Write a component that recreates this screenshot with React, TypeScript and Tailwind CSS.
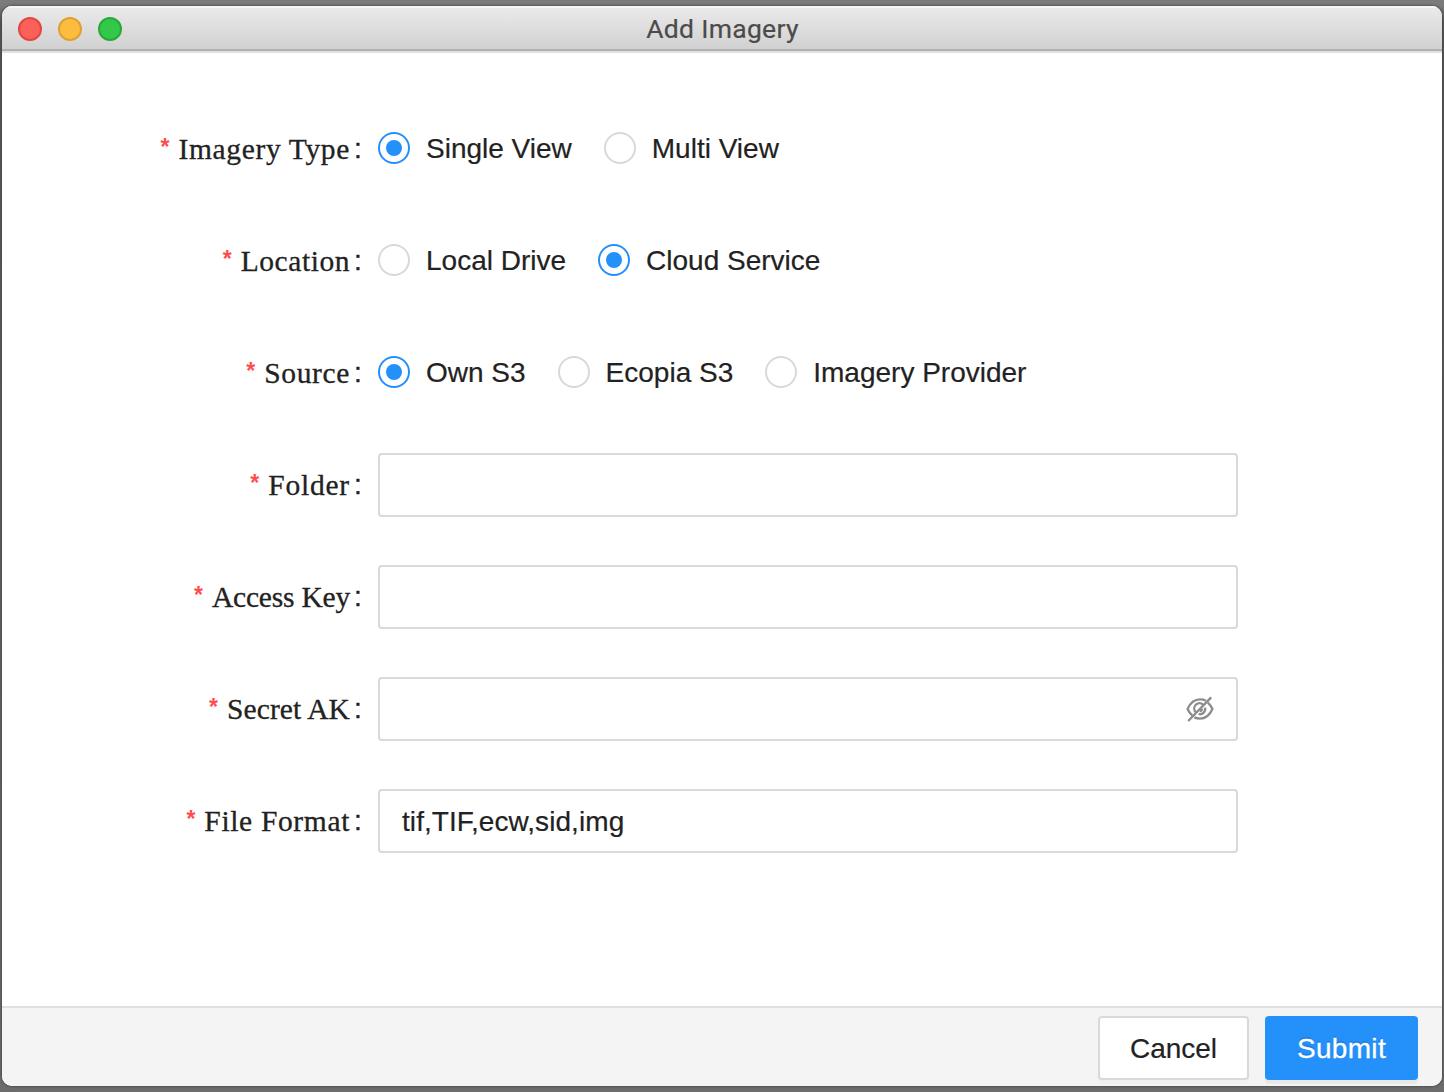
import type { ReactNode } from "react";

const sans = "font-['Liberation_Sans',Arial,sans-serif]";

function Radio({ checked, label }: { checked?: boolean; label: string }) {
  return (
    <label className="flex items-center">
      <span
        className={
          "flex size-8 shrink-0 items-center justify-center rounded-full border-2 bg-white " +
          (checked ? "border-[#2490fa]" : "border-[#d9d9d9]")
        }
      >
        {checked && <span className="size-4 rounded-full bg-[#2490fa]" />}
      </span>
      <span className="px-4 pt-[2px] leading-8 whitespace-nowrap [-webkit-text-stroke:0.2px_#222222]">{label}</span>
    </label>
  );
}

function Row({ label, tracking, children }: { label: string; tracking: string; children: ReactNode }) {
  return (
    <div className="flex h-16">
      <div className="flex w-[376px] shrink-0 items-center justify-end pr-[16px]">
        <span className="mr-[9px] pb-[5px] text-[23px] leading-8 font-bold text-[#ff4d4f]">*</span>
        <span className={"font-['Liberation_Serif',Georgia,serif] text-[29.5px] leading-8 whitespace-nowrap [-webkit-text-stroke:0.3px_#222222] " + tracking}>{label}</span>
        <span className="ml-[4px] w-2 text-[28px] leading-8 [-webkit-text-stroke:0.4px_#222222]">:</span>
      </div>
      {children}
    </div>
  );
}

function Field({ value, children }: { value?: string; children?: ReactNode }) {
  return (
    <div className="flex w-[860px] items-center justify-between rounded-[4px] border-2 border-[#d9d9d9] bg-white px-[22px]">
      <span className="pt-[2px] leading-8 tracking-[0.07px] [-webkit-text-stroke:0.2px_#222222]">{value}</span>
      {children}
    </div>
  );
}

function EyeInvisible() {
  return (
    <svg width="28" height="28" viewBox="0 0 28 28" fill="none" stroke="#8c8c8c" strokeWidth="2.3">
      <path d="M20 5.7C18.2 4.8 16.1 4.4 14 4.4C8.4 4.4 4.2 8 1.6 14C2.6 16.4 4.2 18.8 6.4 20.6" />
      <path d="M21.8 7.6C23.8 9.3 25.4 11.6 26.4 14C23.8 20 19.6 23.6 14 23.6C12 23.6 10 23.2 8.3 22.4" />
      <path d="M17.2 9.8A5.2 5.2 0 0 0 9.8 17.2" />
      <path d="M19 12.6A5.2 5.2 0 0 1 12.6 19" />
      <path d="M16 13.8A2.2 2.2 0 0 1 13.8 16" />
      <path d="M2.2 26L25.2 2.4" />
    </svg>
  );
}

export default function App() {
  return (
    <div className={"h-[1092px] w-[1444px] overflow-hidden bg-linear-to-b from-[#7b7b7b] from-[0.5%] via-[#565656] via-[2%] to-[#6c6c6c] px-[2px] pt-[6px] text-[28px] text-[#222222] " + sans}>
      <div className="flex h-[1080px] flex-col overflow-hidden rounded-[10px] bg-white shadow-[0_0_3px_#333]">
        <header className="flex h-[45px] shrink-0 items-center border-b-2 border-[#b0b0b0] bg-linear-to-b from-[#ebebeb] to-[#d1d1d1] shadow-[inset_0_2px_0_#f6f6f6]">
          <div className="flex w-[200px] gap-4 pt-[3px] pl-4">
            <span className="size-6 rounded-full border-2 border-[#e2463f] bg-[#fc605b]" />
            <span className="size-6 rounded-full border-2 border-[#dfa033] bg-[#fdbc40]" />
            <span className="size-6 rounded-full border-2 border-[#27aa35] bg-[#34c84a]" />
          </div>
          <h1 className="flex-1 pt-[3px] text-center font-[Roboto,sans-serif] text-[26.5px] leading-8 tracking-[0.3px] text-[#4b4b4b] [-webkit-text-stroke:0.2px_#4b4b4b]">Add Imagery</h1>
          <div className="w-[199px]" />
        </header>
        <main className="flex flex-1 flex-col gap-12 border-t-2 border-[#dde1e5] pt-16">
          <Row label="Imagery Type" tracking="tracking-[0.65px]">
            <div className="flex items-center gap-4 pb-[2px]">
              <Radio checked label="Single View" />
              <Radio label="Multi View" />
            </div>
          </Row>
          <Row label="Location" tracking="tracking-[0.55px]">
            <div className="flex items-center gap-4 pb-[2px]">
              <Radio label="Local Drive" />
              <Radio checked label="Cloud Service" />
            </div>
          </Row>
          <Row label="Source" tracking="tracking-[0.65px]">
            <div className="flex items-center gap-4 pb-[2px]">
              <Radio checked label="Own S3" />
              <Radio label="Ecopia S3" />
              <Radio label="Imagery Provider" />
            </div>
          </Row>
          <Row label="Folder" tracking="tracking-[0.8px]">
            <Field />
          </Row>
          <Row label="Access Key" tracking="tracking-[-0.2px]">
            <Field />
          </Row>
          <Row label="Secret AK" tracking="tracking-[0.1px]">
            <Field>
              <EyeInvisible />
            </Field>
          </Row>
          <Row label="File Format" tracking="tracking-[0.65px]">
            <Field value="tif,TIF,ecw,sid,img" />
          </Row>
        </main>
        <footer className="flex h-20 shrink-0 items-start justify-end gap-4 border-t-2 border-[#dde1e5] bg-[#f4f4f4] pt-2 pr-6">
          <button className="h-16 w-[151px] rounded-[4px] border-2 border-[#d9d9d9] bg-white pt-[2px] shadow-[0_4px_0_rgba(0,0,0,0.016)] [-webkit-text-stroke:0.2px_#222222]">Cancel</button>
          <button className="h-16 w-[153px] rounded-[4px] bg-[#2490fa] pt-[2px] tracking-[0.3px] text-white shadow-[0_4px_0_rgba(0,0,0,0.045)] [-webkit-text-stroke:0.3px_#ffffff] [text-shadow:0_-2px_0_rgba(0,0,0,0.12)]">Submit</button>
        </footer>
      </div>
    </div>
  );
}
